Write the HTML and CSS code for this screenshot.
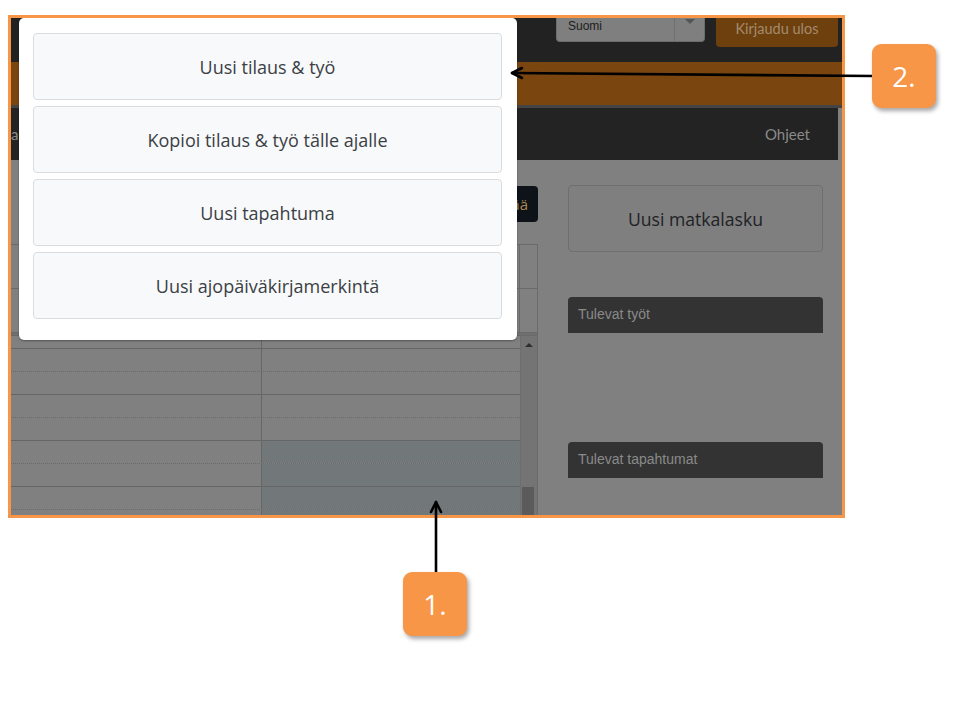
FILE: index.html
```
<!DOCTYPE html>
<html lang="fi">
<head>
<meta charset="utf-8">
<title>Uusi</title>
<link rel="stylesheet" href="styles.css">
</head>
<body>
<div class="page">
  <div class="frame">
    <div class="topbar">
      <div class="lang-select"><span class="lang-text">Suomi</span><span class="lang-caret"></span></div>
      <div class="logout">Kirjaudu ulos</div>
    </div>
    <div class="band"></div>
    <div class="nav">
      <span class="nav-left">a</span>
      <span class="nav-right">Ohjeet</span>
    </div>
    <div class="content">
      <div class="left-col">
        <div class="toolbar"><div class="dark-btn">Lisää</div></div>
        <div class="table">
          <div class="thead">
            <div class="hrow"><div class="hc c1"></div><div class="hc c2"></div><div class="hc c3"></div></div>
            <div class="hrow"><div class="hc c1"></div><div class="hc c2"></div><div class="hc c3"></div></div>
          </div>
          <div class="tbody">
            <div class="rows">
              <div class="row first"><div class="cell c1"></div><div class="cell c2"></div></div>
              <div class="row dotted"><div class="cell c1"></div><div class="cell c2"></div></div>
              <div class="row"><div class="cell c1"></div><div class="cell c2"></div></div>
              <div class="row dotted"><div class="cell c1"></div><div class="cell c2"></div></div>
              <div class="row"><div class="cell c1"></div><div class="cell c2"></div></div>
              <div class="row dotted"><div class="cell c1"></div><div class="cell c2 hl"></div></div>
              <div class="row"><div class="cell c1"></div><div class="cell c2 hl"></div></div>
              <div class="row dotted"><div class="cell c1"></div><div class="cell c2 hl"></div></div>
              <div class="row"><div class="cell c1"></div><div class="cell c2 hl"></div></div>
            </div>
            <div class="scrollbar">
              <div class="sb-arrow"></div>
              <div class="sb-thumb"></div>
            </div>
          </div>
        </div>
      </div>
      <div class="right-col">
        <div class="travel-btn">Uusi matkalasku</div>
        <div class="panel-head">Tulevat työt</div>
        <div class="panel-body"></div>
        <div class="panel-head">Tulevat tapahtumat</div>
      </div>
    </div>
    <div class="modal">
      <div class="modal-btn">Uusi tilaus &amp; työ</div>
      <div class="modal-btn">Kopioi tilaus &amp; työ tälle ajalle</div>
      <div class="modal-btn">Uusi tapahtuma</div>
      <div class="modal-btn">Uusi ajopäiväkirjamerkintä</div>
    </div>
  </div>

  <svg class="arrows" width="960" height="720" viewBox="0 0 960 720">
    <g fill="none" stroke="#000" stroke-width="2.6" stroke-linecap="round" stroke-linejoin="round">
      <path d="M873 76 L512 73"/>
      <path d="M522 68 L512 73 L522 78"/>
      <path d="M436 572 L436 502"/>
      <path d="M431 512 L436 502 L441 512"/>
    </g>
  </svg>
  <div class="callout callout-2">2.</div>
  <div class="callout callout-1">1.</div>
</div>
</body>
</html>
```

FILE: styles.css
```
* { box-sizing: border-box; }

html, body {
  margin: 0;
  padding: 0;
  background: #ffffff;
}

.page {
  position: relative;
  width: 960px;
  height: 720px;
  padding: 15px 0 0 8px;
  font-family: "Open Sans", "Liberation Sans", sans-serif;
}

.frame {
  position: relative;
  width: 837px;
  height: 503px;
  border: 3px solid #f79646;
  background: #808080;
  overflow: hidden;
}

/* top bar */
.topbar {
  height: 44px;
  background: #222222;
  display: flex;
  align-items: flex-start;
  padding-left: 545px;
}

.lang-select {
  width: 149px;
  height: 24px;
  background: #7f7f7f;
  border: 1px solid #6c6c6c;
  border-top: none;
  border-radius: 0 0 4px 4px;
  display: flex;
  align-items: center;
  padding-left: 11px;
}

.lang-text {
  font-family: "Liberation Sans", sans-serif;
  font-size: 12px;
  color: #1c1c1c;
  flex: 1;
  margin-top: -8px;
}

.lang-caret {
  width: 30px;
  height: 23px;
  border-left: 1px solid #707070;
  position: relative;
}

.lang-caret::after {
  content: "";
  position: absolute;
  left: 10px;
  top: 1px;
  border-left: 5px solid transparent;
  border-right: 5px solid transparent;
  border-top: 5px solid #555555;
}

.logout {
  margin-left: 11px;
  width: 122px;
  height: 29px;
  background: #6e400d;
  border-radius: 0 0 4px 4px;
  color: #a38b70;
  font-family: "Lato", "Liberation Sans", sans-serif;
  font-size: 14.5px;
  display: flex;
  align-items: center;
  justify-content: center;
  padding-bottom: 9px;
}

.band {
  height: 46px;
  background: #7a450f;
  border-bottom: 3px solid #444444;
}

.nav {
  width: 827px;
  height: 52px;
  background: #232323;
  display: flex;
  align-items: center;
  justify-content: space-between;
  font-family: "Lato", "Liberation Sans", sans-serif;
  font-size: 15px;
  color: #8a8a8a;
}

.nav-left {
  margin-left: 0;
}

.nav-right {
  margin-right: 28px;
}

/* content */
.content {
  display: flex;
  gap: 30px;
}

.left-col {
  width: 527px;
  padding-top: 26px;
}

.toolbar {
  display: flex;
  justify-content: flex-end;
  height: 36px;
  margin-bottom: 22px;
}

.dark-btn {
  width: 80px;
  height: 36px;
  background: #0e131a;
  border-radius: 4px;
  color: #a8874e;
  font-size: 15px;
  display: flex;
  align-items: center;
  justify-content: flex-end;
  padding-right: 10px;
}

.table {
  border-top: 1px solid #6a6a6a;
  border-right: 1px solid #6a6a6a;
}

.hrow {
  display: flex;
  height: 44px;
  border-bottom: 1px solid #6a6a6a;
}

.hc.c1 { width: 251px; border-right: 1px solid #6a6a6a; }
.hc.c2 { width: 258px; border-right: 1px solid #6a6a6a; }
.hc.c3 { flex: 1; }

.thead {
  border-bottom: 2px solid #6f6f6f;
}

.tbody {
  display: flex;
  height: 180px;
  border-top: 1px solid #6a6a6a;
}

.rows {
  width: 509px;
}

.row {
  display: flex;
  height: 23px;
  border-bottom: 1px solid #666666;
}

.row.first { height: 13px; }

.row.dotted { border-bottom: 1px dotted #6a6a6a; }

.cell.c1 { width: 251px; border-right: 1px solid #666666; }
.cell.c2 { flex: 1; }
.cell.hl { background: #72777a; }

.scrollbar {
  flex: 1;
  background: #747474;
  position: relative;
  border-left: 1px solid #6d6d6d;
}

.sb-arrow {
  position: absolute;
  left: 4px;
  top: 7px;
  border-left: 4px solid transparent;
  border-right: 4px solid transparent;
  border-bottom: 4px solid #2e2e2e;
}

.sb-thumb {
  position: absolute;
  left: 1px;
  right: 3px;
  top: 151px;
  height: 40px;
  background: #5b5b5b;
}

.right-col {
  width: 255px;
  padding-top: 25px;
}

.travel-btn {
  height: 67px;
  border: 1px solid #6f6f6f;
  border-radius: 4px;
  background: #7f7f7f;
  display: flex;
  align-items: center;
  justify-content: center;
  font-size: 17.6px;
  color: #1e2226;
  margin-bottom: 45px;
}

.panel-head {
  height: 36px;
  background: #333333;
  border-radius: 4px 4px 0 0;
  color: #8a8a8a;
  font-family: "Liberation Sans", sans-serif;
  font-size: 14px;
  padding: 9px 10px;
}

.panel-body {
  height: 109px;
}

/* modal */
.modal {
  position: absolute;
  left: 8px;
  top: 0;
  width: 498px;
  height: 322px;
  background: #ffffff;
  border-radius: 5px;
  box-shadow: 0 1px 2px rgba(0, 0, 0, 0.35);
  padding: 15px 15px 0 14px;
  display: flex;
  flex-direction: column;
  gap: 6px;
}

.modal-btn {
  height: 67px;
  background: #f8f9fa;
  border: 1px solid #dadde0;
  border-radius: 4px;
  display: flex;
  align-items: center;
  justify-content: center;
  font-size: 18px;
  color: #3b4045;
}

/* annotations */
.arrows {
  position: absolute;
  left: 0;
  top: 0;
  pointer-events: none;
}

.callout {
  position: absolute;
  width: 64px;
  height: 64px;
  background: #f79646;
  border-radius: 9px;
  box-shadow: 2px 3px 4px rgba(0, 0, 0, 0.35);
  color: #ffffff;
  font-family: "Open Sans", "Liberation Sans", sans-serif;
  font-size: 28px;
  display: flex;
  align-items: center;
  justify-content: center;
}

.callout-2 { left: 872px; top: 44px; }
.callout-1 { left: 403px; top: 572px; }
```
